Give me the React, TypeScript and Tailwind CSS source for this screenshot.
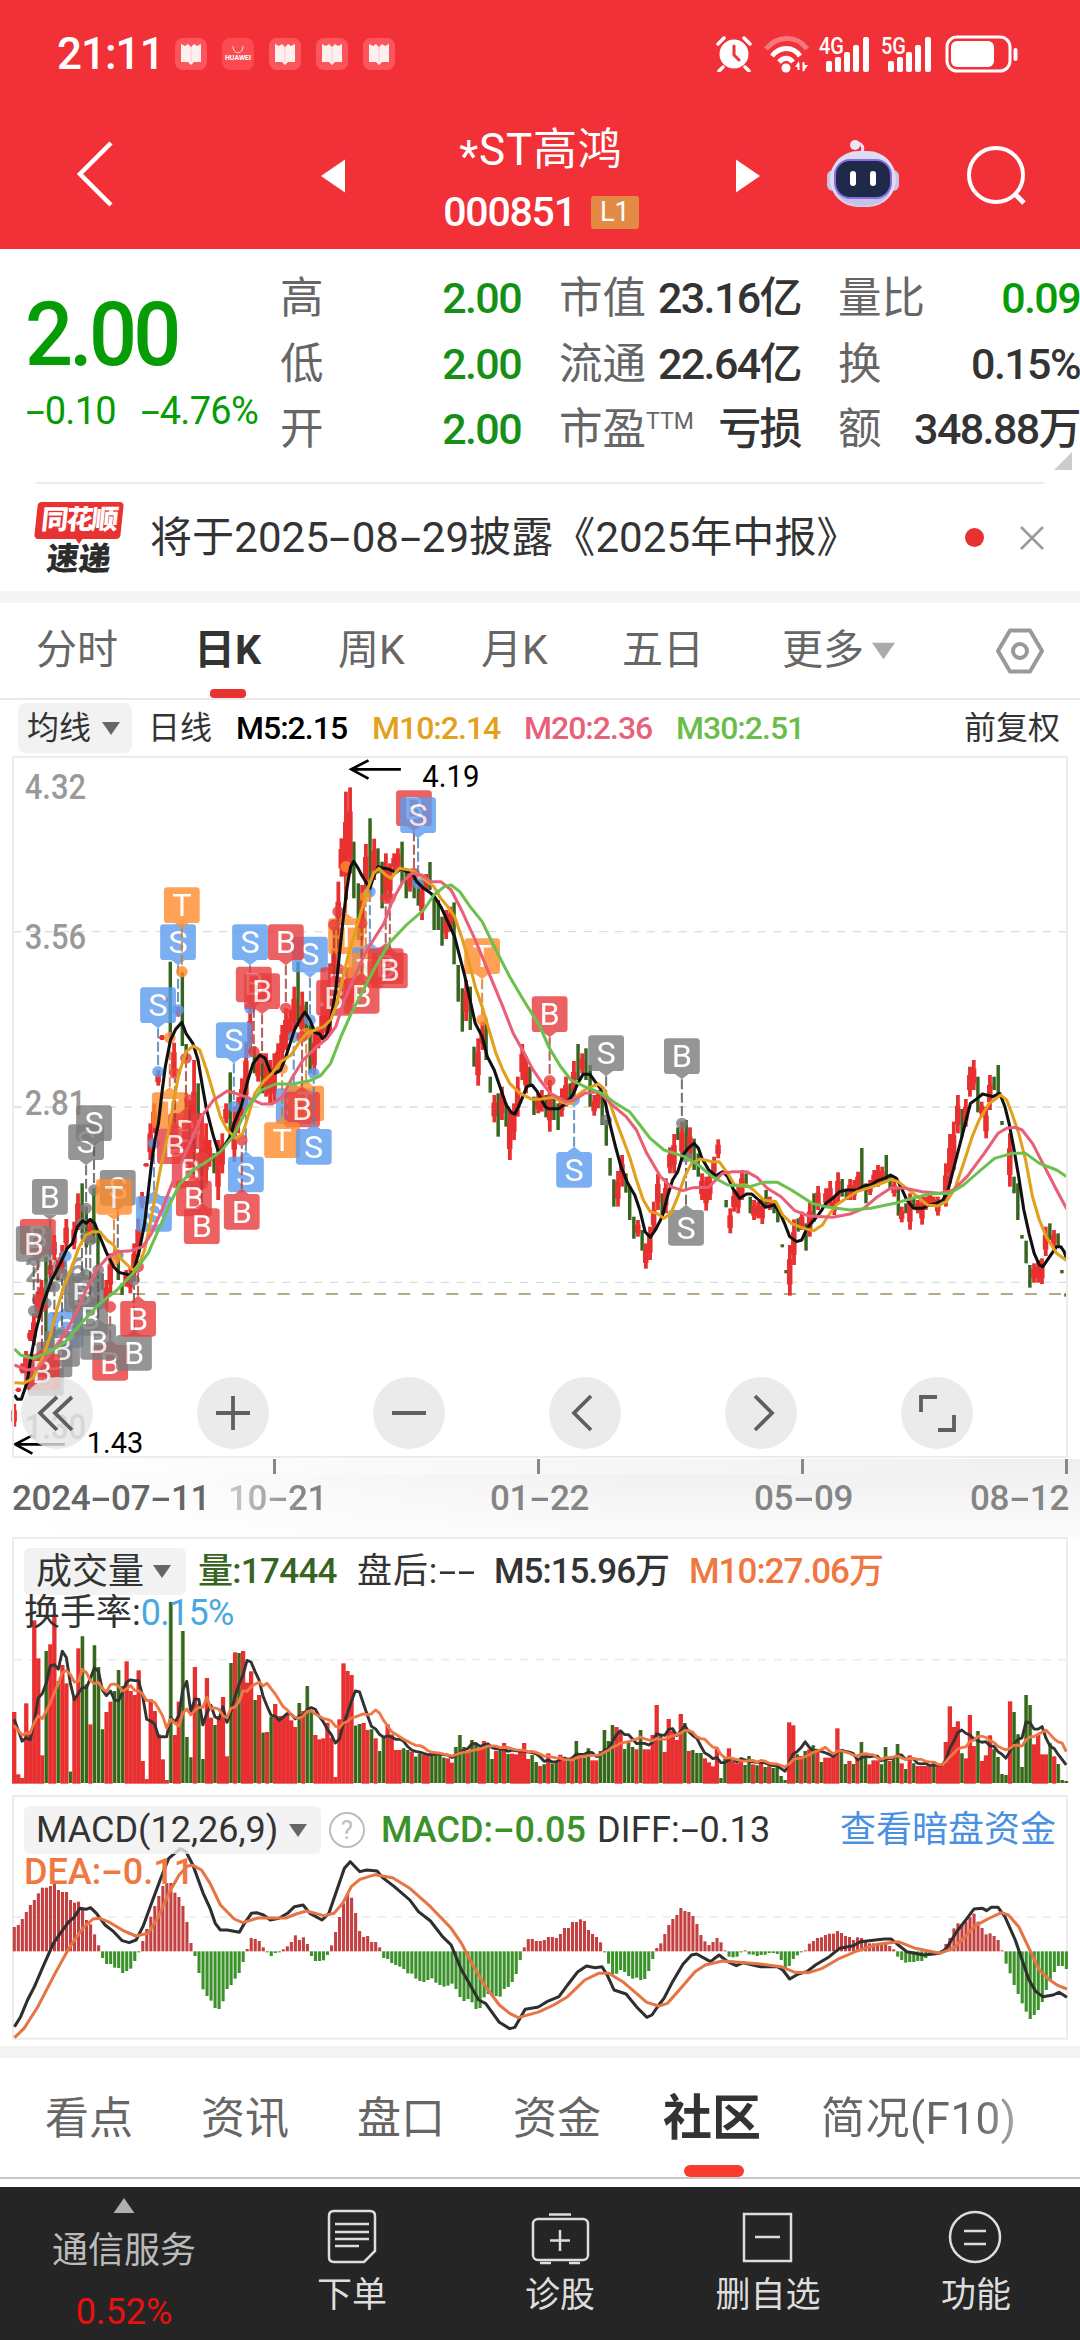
import { Fragment } from "react";
import type { ReactNode } from "react";

// Plot units: 3136 wide per panel, split into two halves of 1568.
const HALF = 1568;
const STEP = 11.66;
const RED = "#e83030";
const GREEN = "#37651f";

type Bar = { x: number; top: number; bottom: number };

function points(left: string, right: string) {
  const moved = right.split(" ").map((pair) => {
    const [x, y] = pair.split(",").map(Number);
    return `${x + HALF},${y}`;
  });
  return `${left} ${moved.join(" ")}`;
}

function bars(data: string, offset = 0): Bar[] {
  return data.split(" ").map((item) => {
    const [x, top, bottom] = item.split(",").map(Number);
    return { x: x + offset, top, bottom };
  });
}

const ma5 = points(
  "42,1965 50,1978 62,1978 78,1930 90,1850 105,1770 125,1690 150,1620 175,1570 195,1525 210,1510 225,1460 240,1442 250,1450 262,1438 275,1450 290,1490 310,1540 330,1580 345,1597 365,1602 380,1606 392,1580 405,1530 420,1450 430,1360 440,1270 450,1200 460,1150 470,1060 480,980 495,900 510,868 528,847 540,880 560,910 575,960 588,1040 600,1110 620,1190 635,1238 650,1220 668,1190 680,1150 700,1100 720,1020 735,970 755,945 770,955 785,995 800,1000 815,990 830,950 855,870 870,840 885,816 900,840 915,878 928,882 938,898 950,880 962,830 975,750 985,650 995,550 1008,440 1018,380 1027,364 1040,385 1050,405 1065,430 1074,445 1085,410 1098,380 1115,385 1130,388 1150,398 1165,385 1180,395 1195,395 1210,425 1230,445 1245,455 1262,470 1280,500 1300,545 1320,590 1335,650 1350,710 1365,780 1380,850 1400,890 1415,950 1435,990 1455,1050 1470,1095 1485,1118 1495,1122 1510,1090 1530,1040 1545,1035 1560,1055",
  "15,1100 25,1106 55,1106 75,1090 95,1065 110,1030 125,1003 145,1003 160,1025 175,1045 190,1090 205,1160 218,1215 235,1280 255,1330 275,1365 290,1410 305,1475 320,1492 335,1470 355,1430 370,1370 385,1320 400,1295 415,1245 430,1225 447,1210 460,1225 470,1255 490,1290 510,1307 530,1295 545,1310 560,1345 580,1375 600,1362 615,1362 635,1380 655,1402 680,1395 695,1415 710,1450 725,1490 745,1505 760,1500 775,1465 800,1435 815,1415 830,1390 850,1375 870,1355 890,1350 920,1350 940,1338 960,1335 980,1322 1000,1315 1018,1305 1035,1315 1050,1345 1065,1380 1085,1405 1110,1405 1130,1395 1150,1390 1170,1380 1185,1350 1200,1290 1215,1230 1235,1150 1250,1090 1270,1075 1285,1062 1315,1070 1335,1060 1350,1100 1362,1150 1375,1220 1390,1310 1405,1410 1420,1480 1435,1540 1450,1575 1460,1580 1480,1550 1500,1520 1512,1520 1522,1535 1530,1558",
);
const ma10 = points(
  "42,1928 70,1930 95,1915 125,1850 145,1790 165,1710 185,1640 205,1590 230,1520 250,1485 270,1475 290,1475 310,1500 330,1515 350,1555 370,1575 388,1592 405,1570 420,1530 440,1430 465,1290 490,1170 505,1080 520,1000 540,935 562,918 580,930 600,990 620,1060 640,1130 660,1170 685,1195 705,1180 720,1130 740,1060 765,1025 790,1000 815,965 845,945 870,905 890,880 915,870 940,860 960,840 975,800 990,740 1010,650 1030,580 1050,510 1070,440 1085,400 1100,385 1120,405 1135,415 1160,385 1190,390 1210,400 1240,425 1260,440 1280,475 1300,500 1320,530 1340,590 1360,660 1380,740 1400,800 1420,870 1440,940 1460,990 1480,1030 1510,1060 1545,1078",
  "0,1078 40,1072 60,1085 80,1092 95,1088 110,1065 130,1050 150,1040 170,1032 185,1045 200,1080 220,1140 240,1195 260,1250 280,1320 300,1380 320,1415 340,1420 360,1435 380,1420 400,1370 420,1310 440,1270 465,1257 500,1265 520,1265 545,1300 565,1335 600,1335 620,1350 650,1380 685,1385 705,1425 730,1450 765,1465 795,1472 820,1455 835,1430 860,1395 890,1375 920,1355 950,1345 980,1335 1020,1318 1040,1325 1065,1345 1090,1365 1125,1395 1155,1398 1180,1385 1205,1345 1230,1270 1255,1190 1275,1140 1305,1090 1338,1065 1355,1080 1370,1120 1390,1180 1410,1260 1430,1370 1450,1440 1470,1490 1500,1540 1530,1562",
);
const ma20 = points(
  "42,1875 80,1890 110,1885 150,1835 190,1780 220,1720 250,1650 280,1590 310,1555 340,1535 380,1532 415,1520 440,1480 470,1410 500,1330 530,1260 560,1190 585,1130 620,1080 660,1053 690,1062 720,1073 760,1092 790,1092 820,1070 850,1010 880,960 920,920 950,895 975,860 1000,780 1030,710 1060,640 1090,590 1115,550 1140,480 1170,425 1195,400 1225,405 1250,425 1280,425 1310,450 1340,510 1380,600 1420,700 1460,800 1490,880 1520,935 1545,985",
  "0,1020 30,1060 75,1085 100,1080 130,1060 170,1055 210,1095 250,1130 280,1170 310,1240 350,1310 380,1340 415,1352 445,1343 490,1342 530,1300 560,1295 600,1295 630,1312 660,1345 700,1370 740,1412 780,1428 850,1432 900,1422 940,1405 980,1370 1020,1343 1060,1345 1110,1355 1160,1360 1200,1350 1240,1310 1290,1240 1330,1180 1355,1165 1380,1162 1400,1170 1430,1210 1460,1270 1500,1350 1530,1408",
);
const ma30 = points(
  "42,1827 60,1845 95,1855 140,1838 190,1805 240,1745 290,1690 340,1650 390,1595 430,1540 460,1470 490,1400 520,1335 560,1290 600,1265 640,1235 680,1185 720,1100 760,1050 800,1032 850,1032 900,1022 930,1008 960,970 990,890 1020,820 1050,760 1090,680 1130,610 1180,555 1230,510 1260,465 1290,440 1310,435 1335,455 1365,500 1400,545 1440,630 1480,710 1520,780",
  "0,860 25,920 60,980 90,1020 130,1040 180,1060 220,1090 260,1115 290,1155 320,1195 360,1230 420,1250 460,1275 500,1310 545,1335 610,1340 650,1327 690,1327 730,1350 790,1390 830,1400 900,1410 960,1405 1030,1390 1080,1375 1130,1362 1190,1360 1230,1335 1280,1290 1320,1255 1370,1240 1410,1240 1450,1270 1500,1290 1530,1310",
);

const redCandles = [
  ...bars(
    "41,1992,2060 53,1943,1956 64,1870,1900 75,1833,1900 87,1770,1803 98,1720,1816 108,1655,1735 120,1620,1700 146,1560,1615 157,1485,1560 168,1560,1610 180,1515,1600 192,1437,1530 215,1445,1528 226,1360,1470 261,1440,1510 308,1620,1700 320,1540,1660 366,1590,1640 378,1580,1660 389,1510,1625 401,1436,1550 412,1356,1405 424,1269,1280 436,1150,1260 447,1090,1180 459,990,1037 470,885,900 482,773,785 505,908,1010 517,800,830 540,1060,1230 551,1080,1300 563,960,1300 586,1120,1350 598,1150,1330 608,1200,1280 633,1200,1380 645,1180,1300 656,1090,1150 680,1100,1265 691,1070,1180 702,1015,1130 714,905,1110 726,805,940 749,950,1025 772,940,1070 784,960,1090 796,940,1090 807,910,1000 819,855,960 830,805,930 842,810,900 854,740,870 877,755,900 912,870,1005 924,860,925 935,800,900 947,760,880 958,670,880 970,560,800 982,425,640 991,295,410 1004,155,480 1016,142,400 1051,435,600 1062,312,450 1086,296,420 1120,340,480 1132,370,475 1144,340,390 1155,325,390 1190,390,455 1225,420,540 1237,402,450 1295,510,597 1307,500,575 1353,720,843 1388,895,1037 1400,845,930 1435,1065,1147 1457,1040,1140 1480,1110,1260 1492,1090,1200 1503,1010,1130 1516,912,1020 1527,950,1060 1562,1060,1120",
  ),
  ...bars(
    "5,1050,1115 28,1020,1175 63,1045,1130 75,1010,1100 98,963,1080 122,940,1000 157,1065,1127 168,1050,1105 226,1293,1400 238,1245,1340 284,1440,1490 307,1510,1586 319,1460,1560 330,1385,1475 342,1302,1410 365,1315,1420 377,1222,1300 389,1182,1300 412,1145,1260 435,1162,1260 470,1300,1380 482,1310,1412 493,1300,1380 505,1250,1310 517,1198,1255 552,1405,1480 563,1350,1415 575,1340,1420 586,1290,1380 621,1380,1440 633,1385,1435 645,1375,1452 667,1370,1410 725,1515,1667 737,1438,1575 760,1415,1470 783,1385,1490 807,1338,1410 830,1345,1400 842,1323,1400 854,1370,1425 865,1297,1390 900,1317,1380 912,1320,1380 923,1295,1350 958,1320,1365 970,1290,1340 981,1275,1340 993,1280,1330 1028,1320,1370 1050,1400,1447 1074,1360,1469 1097,1380,1420 1109,1370,1454 1120,1370,1410 1132,1355,1400 1143,1370,1400 1155,1370,1427 1178,1270,1400 1190,1182,1330 1201,1145,1290 1213,1065,1180 1236,1077,1160 1248,980,1070 1259,960,1050 1282,1085,1130 1295,1100,1195 1306,1005,1110 1364,1180,1340 1434,1570,1628 1446,1560,1628 1457,1555,1632 1468,1460,1548 1492,1470,1520",
    HALF,
  ),
];

const greenCandles = [
  ...bars(
    "133,1550,1800 168,1560,1620 238,1330,1480 250,1400,1522 272,1345,1510 284,1470,1610 296,1600,1650 343,1540,1620 354,1630,1665 494,665,890 529,697,918 540,912,960 575,1030,1140 586,1190,1250 621,1240,1300 668,997,1190 738,920,1000 761,950,1060 865,665,860 889,785,880 900,850,1000 1027,305,475 1040,430,600 1074,235,470 1097,325,400 1109,365,505 1167,305,430 1179,390,475 1202,400,475 1214,420,497 1248,366,450 1260,470,570 1272,480,570 1283,530,617 1318,487,673 1330,675,785 1342,745,875 1365,740,870 1376,920,980 1411,840,960 1423,1010,1058 1446,1060,1190 1469,1090,1160 1538,980,1040 1550,1070,1125",
  ),
  ...bars(
    "17,1065,1132 40,1070,1140 52,1090,1170 87,1030,1090 110,912,1020 133,925,1020 145,975,1100 180,1060,1155 192,1140,1217 203,1254,1307 214,1318,1400 249,1300,1358 260,1340,1440 272,1430,1496 296,1470,1532 354,1360,1430 400,1162,1200 424,1140,1250 447,1196,1290 459,1240,1310 540,1380,1402 598,1300,1340 610,1370,1420 656,1350,1400 679,1380,1420 690,1400,1447 703,1513,1522 714,1590,1600 749,1435,1475 772,1450,1532 795,1360,1445 877,1317,1370 889,1350,1380 934,1224,1350 946,1330,1390 1005,1245,1325 1016,1310,1350 1040,1340,1427 1062,1390,1420 1085,1370,1400 1225,1107,1190 1271,1010,1117 1318,1010,1050 1330,975,1065 1341,1143,1155 1376,1310,1360 1387,1330,1440 1399,1485,1496 1411,1502,1570 1422,1575,1643 1480,1450,1500 1504,1480,1520 1515,1590,1600 1527,1660,1670",
    HALF,
  ),
];

// letter + tone, centre x, box top, y of the dot the stem leads to
type Marker = [string, string, number, number, number];

const toneFill: Record<string, string> = {
  blue: "#5c9cee",
  red: "#e83c3c",
  orange: "#ff8b2c",
  gray: "#7b7b7b",
};

const stemStroke: Record<string, string> = {
  blue: "#4a80b8",
  red: "#a83a3a",
  orange: "#d8741f",
  gray: "#555",
};

const markers: Marker[] = [
  ["S", "gray", 250, 1153, 1405],
  ["S", "gray", 273, 1096, 1350],
  ["B", "gray", 145, 1317, 1640],
  ["B", "red", 110, 1437, 1680],
  ["B", "gray", 98, 1458, 1713],
  ["S", "gray", 342, 1290, 1545],
  ["T", "orange", 331, 1317, 1560],
  ["S", "blue", 447, 1368, 1210],
  ["S", "blue", 191, 1716, 1548],
  ["S", "gray", 250, 1600, 1490],
  ["B", "gray", 238, 1610, 1450],
  ["B", "gray", 262, 1680, 1500],
  ["B", "gray", 133, 1860, 1690],
  ["B", "gray", 158, 1805, 1640],
  ["B", "gray", 180, 1773, 1600],
  ["B", "red", 122, 1842, 1700],
  ["B", "red", 320, 1815, 1700],
  ["B", "gray", 285, 1752, 1590],
  ["B", "gray", 389, 1785, 1620],
  ["B", "red", 401, 1683, 1580],
  ["S", "blue", 459, 742, 995],
  ["S", "blue", 517, 553, 810],
  ["T", "orange", 528, 442, 695],
  ["T", "orange", 493, 1057, 893],
  ["B", "red", 540, 1120, 955],
  ["B", "red", 508, 1165, 1000],
  ["B", "red", 551, 1238, 1080],
  ["B", "red", 563, 1322, 1160],
  ["B", "red", 586, 1405, 1250],
  ["S", "blue", 714, 1250, 1090],
  ["B", "red", 702, 1362, 1200],
  ["S", "blue", 679, 847, 1100],
  ["S", "blue", 726, 553, 805],
  ["B", "red", 737, 680, 935],
  ["B", "red", 761, 700, 955],
  ["S", "blue", 900, 590, 840],
  ["B", "red", 830, 553, 805],
  ["S", "blue", 853, 1045, 890],
  ["T", "orange", 889, 1037, 880],
  ["B", "red", 877, 1055, 890],
  ["T", "orange", 819, 1147, 985],
  ["S", "blue", 911, 1167, 1000],
  ["T", "orange", 1005, 535, 380],
  ["B", "red", 982, 682, 515],
  ["B", "red", 970, 720, 555],
  ["S", "blue", 1074, 622, 455],
  ["T", "orange", 1062, 638, 470],
  ["B", "red", 1120, 625, 475],
  ["B", "red", 1132, 638, 475],
  ["B", "red", 1050, 714, 550],
  ["B", "red", 1202, 151, 400],
  ["S", "blue", 1214, 172, 430],
  ["T", "orange", 1400, 595, 840],
  ["B", "red", 1596, 769, 1022],
  ["S", "blue", 1667, 1236, 1080],
  ["S", "gray", 1760, 886, 1140],
  ["B", "gray", 1980, 895, 1150],
  ["S", "gray", 1992, 1410, 1250],
];

const volumeTops =
  "543r 730r 741r 517r 600r 268r 382r 673r 360g 340r 250r 450g 402r 457r 722g 500r 352r 316g 460g 580r 343g 408g 595g 543r 512r 480g 417g 465g 391r 480r 492r 418r 690r 744r 505r 540r 610r 685r 747r 213g 612r 512r 300g 618g 679g 408r 520g 684g 441r 560r 582g 555r 498r 676r 396g 364r 366g 360r 455r 421r 507g 492r 605g 603r 558g 519r 555r 555r 550r 568r 588r 516g 540r 465g 540g 612r 625r 622r 575r 620r 738r 565r 397r 420r 432r 584g 579g 576r 597r 595g 622r 660g 618g 580r 610r 657r 657r 652g 657g 662r 677g 668g 672r 675r 660g 670g 670g 680g 682r 695r 648g 612g 648g 660r 627g 640g 655r 630r 640g 684g 660r 655g 636r 669g 668r 670r 660r 636r 684r 672g 693g 705r 700g 667r 698g 690g 671r 680r 685g 680r 630g 675r 680g 652g 688r 688r 660g 597g 630g 582g 588r 600r 654g 630g 648g 655r 597g 655r 655r 612r 522r 615g 663r 564r 600r 627r 549r 576g 660r 657g 666g 666g 682r 694r 706r 650r 741g 684g 652r 690r 697r 690r 702g 675g 700r 703g 690r 708g 706r 711g 705g 735g 747g 574r 583r 670g 675r 660g 655r 643g 655r 693g 680r 680r 675r 592r 660g 699g 690r 699g 685r 633g 670g 700r 688r 688r 700g 648g 690r 685g 639g 697r 714g 673r 697g 705r 705r 705r 708r 690g 705r 705r 633r 526r 588r 571r 667g 682r 552r 645r 600g 690r 673r 613r 655g 678g 729g 732g 511r 543g 610g 708g 492g 522g 640r 610r 670r 670r 637g 676r 699g 747g 750g";

const volume = volumeTops.split(" ").map((item) => ({ top: parseInt(item, 10), up: item.endsWith("r") }));

function average(period: number) {
  const tops = [...Array<number>(period).fill(period === 5 ? 570 : 588), ...volume.map((bar) => bar.top)];
  return volume
    .map((_, i) => {
      const slice = tops.slice(i + 1, i + 1 + period);
      return `${41 + i * STEP},${slice.reduce((sum, value) => sum + value, 0) / period}`;
    })
    .join(" ");
}

const macdEnds =
  "411 405 387 366 345 330 310 293 293 288 281 300 306 306 330 338 335 360 390 403 433 466 504 522 522 533 534 549 543 536 513 486 453 417 380 348 318 288 279 279 308 321 348 396 459 498 549 598 618 632 654 657 634 597 585 566 549 516 477 444 447 453 472 486 498 489 486 478 469 456 436 450 442 462 498 513 513 511 495 466 426 381 340 312 323 369 423 441 438 456 456 472 504 507 519 525 530 537 550 551 566 573 576 570 565 578 585 590 587 581 597 621 633 627 637 657 654 622 612 618 618 620 597 591 576 552 510 472 447 447 453 453 450 441 441 444 432 414 414 396 396 388 393 420 432 441 457 487 521 553 551 540 546 558 566 563 570 567 543 507 474 460 432 405 387 375 354 363 366 378 402 435 454 465 456 444 457 481 500 502 500 487 481 493 494 498 495 494 489 489 492 510 535 528 507 496 487 481 461 453 444 442 435 431 431 423 429 438 441 450 442 444 455 460 460 460 462 462 468 478 500 510 518 516 516 513 513 504 495 490 488 480 462 444 415 400 402 394 382 371 395 414 433 430 438 450 481 521 550 585 612 640 665 687 675 660 636 600 570 546 528 528 537"
    .split(" ")
    .map(Number);

const diffLine = points(
  "42,710 60,680 80,630 100,590 125,530 155,460 175,430 200,395 215,382 232,355 250,358 263,353 280,370 305,405 330,425 355,452 375,458 395,450 415,410 440,340 465,270 490,205 510,188 524,176 540,185 560,225 590,310 610,355 625,400 640,420 660,420 695,427 710,400 730,370 745,368 765,375 785,390 810,385 835,370 855,350 880,345 900,370 935,390 955,370 975,310 1000,235 1017,215 1045,245 1065,240 1095,243 1110,262 1145,290 1190,330 1215,365 1250,393 1285,440 1310,465 1340,540 1360,575 1390,630 1410,640 1450,697 1480,716 1495,712 1525,658 1560,652",
  "0,648 20,635 55,620 80,585 110,545 135,528 160,533 180,530 195,555 215,600 250,612 280,650 310,682 325,675 345,645 360,625 385,575 415,523 440,495 455,492 495,515 520,495 545,515 570,527 590,518 640,530 690,530 705,540 725,567 750,552 775,545 800,525 840,500 870,475 910,467 930,455 1000,447 1020,447 1040,465 1065,485 1115,495 1160,490 1180,475 1210,425 1240,385 1260,357 1285,355 1297,362 1310,352 1330,352 1350,380 1380,450 1400,510 1420,570 1440,605 1460,620 1490,615 1507,607 1530,622",
);
const deaLine = points(
  "42,743 70,715 110,650 160,550 200,475 240,415 270,387 290,385 320,398 360,423 395,438 430,430 460,380 490,310 520,255 545,228 560,226 585,240 610,280 640,345 680,387 705,398 750,384 830,384 860,372 890,363 940,377 970,370 995,340 1020,290 1045,268 1090,254 1140,263 1190,295 1250,350 1310,415 1340,460 1370,520 1410,590 1450,645 1480,670 1505,683 1560,667",
  "0,664 40,645 80,620 130,570 170,550 200,550 240,575 280,610 310,637 345,648 370,640 400,605 450,545 480,525 530,513 560,515 640,522 700,530 740,547 780,548 820,535 870,505 920,483 980,463 1040,455 1090,475 1160,490 1200,475 1235,440 1260,410 1300,387 1340,368 1360,375 1390,410 1420,475 1450,540 1480,570 1505,587 1530,597",
);

// Figures with the wide dash the quote board uses.
function Num({ children, className = "" }: { children: string; className?: string }) {
  const parts = children.split("-");
  return (
    <span className={`whitespace-nowrap [font-stretch:88%] ${className}`}>
      {parts.map((part, i) => (
        <Fragment key={i}>
          {i > 0 ? <span className="mx-[0.13em] inline-block scale-x-[1.8]">-</span> : null}
          {part}
        </Fragment>
      ))}
    </span>
  );
}

function Caret({ className = "" }: { className?: string }) {
  return (
    <svg viewBox="0 0 18 13" className={className}>
      <path d="M0 0h18l-9 13z" fill="currentColor" />
    </svg>
  );
}

function BookIcon() {
  return (
    <div className="flex size-8 items-center justify-center rounded-lg bg-[#fd555c]">
      <svg viewBox="0 0 24 24" className="size-6" fill="#fff0f0">
        <path d="M2 2l4 2 3-2 3 3 3-3 3 2 4-2v18h-7l-3 3-3-3H2z" />
        <path d="M12 5v15" stroke="#ffc9cb" strokeWidth="1" />
      </svg>
    </div>
  );
}

function Signal({ label }: { label: string }) {
  return (
    <svg viewBox="0 0 52 38" className="h-[38px] w-[52px] overflow-visible" fill="#fff">
      <text x="0" y="19" fontSize="23" fontWeight="500" textLength="25" lengthAdjust="spacingAndGlyphs">
        {label}
      </text>
      <rect x="7" y="26" width="6" height="11" rx="2" />
      <rect x="16" y="22" width="6" height="15" rx="2" />
      <rect x="25" y="17" width="6" height="20" rx="2" />
      <rect x="34" y="10" width="6" height="27" rx="2" />
      <rect x="44" y="2" width="6" height="35" rx="2" />
    </svg>
  );
}

function StatusBar() {
  return (
    <div className="flex h-[108px] items-center pl-[57px] pr-[61px]">
      <span className="w-[118px] text-[44px] font-medium leading-none tracking-[-1px]">21:11</span>
      <div className="flex gap-[15px]">
        <BookIcon />
        <div className="flex size-8 flex-col items-center justify-center rounded-lg bg-[#fb4a51]">
          <svg viewBox="0 0 12 8" className="h-2 w-3" fill="none" stroke="#fff" strokeWidth="0.8">
            <path d="M1 0c0 9 10 9 10 0" />
          </svg>
          <span className="text-[7px] font-bold leading-[9px]">HUAWEI</span>
        </div>
        <BookIcon />
        <BookIcon />
        <BookIcon />
      </div>
      <div className="ml-auto flex items-center">
        <svg viewBox="0 0 36 36" className="mr-3 size-9" fill="none" stroke="#fff" strokeWidth="3.500" strokeLinecap="round">
          <circle cx="18" cy="18" r="14.500" fill="#fff" stroke="none" />
          <path d="M2 8l6-6M34 8l-6-6M7 31l-4 4M29 31l4 4" />
          <path d="M18 10v9l5 5" stroke="#f13037" strokeWidth="3" />
        </svg>
        <svg viewBox="0 0 46 38" className="mr-[9px] h-[38px] w-[46px]" fill="none" stroke="#fff" strokeWidth="5">
          <path d="M2 14c11-14 31-14 41 0" opacity="0.35" />
          <path d="M8 21c8-10 21-10 28 0" />
          <path d="M15 27c5-5 10-5 14 0" />
          <circle cx="22" cy="33" r="4.500" fill="#fff" stroke="none" />
          <path d="M35 26l-4 6h4zM39 37l5-7h-5z" fill="#fff" stroke="none" />
          <path d="M34.500 28v7M39.500 27v9" strokeWidth="2" />
        </svg>
        <div className="mr-[10px]">
          <Signal label="4G" />
        </div>
        <div className="mr-3">
          <Signal label="5G" />
        </div>
        <svg viewBox="0 0 74 38" className="h-[38px] w-[74px]" fill="none" stroke="#fff" strokeWidth="3">
          <rect x="2" y="2" width="63" height="34" rx="10" />
          <rect x="6" y="6" width="43" height="26" rx="6" fill="#fff" stroke="none" />
          <path d="M70.500 15v9" strokeWidth="4" strokeLinecap="round" />
        </svg>
      </div>
    </div>
  );
}

function RobotIcon() {
  return (
    <svg viewBox="0 0 74 68" className="h-[68px] w-[74px]">
      <path d="M36 12c2-5 0-8-4-9" fill="none" stroke="#f4dcef" strokeWidth="3" />
      <circle cx="29" cy="5" r="5" fill="#eee6fa" />
      <rect x="1" y="30" width="14" height="21" rx="6" fill="#c9c4e6" />
      <rect x="59" y="30" width="14" height="21" rx="6" fill="#c9c4e6" />
      <rect x="4" y="11" width="66" height="56" rx="28" fill="#dedcf3" />
      <path d="M10 53c10 18 44 18 54 0" fill="#c7c2ea" />
      <rect x="9" y="20" width="56" height="38" rx="15" fill="#1f2a4a" stroke="#8b6be0" strokeWidth="2" />
      <rect x="24" y="31" width="6" height="15" rx="3" fill="#fff" />
      <rect x="44" y="31" width="6" height="15" rx="3" fill="#fff" />
    </svg>
  );
}

function Header() {
  return (
    <header className="h-[249px] bg-[#f13037] text-white">
      <StatusBar />
      <div className="flex h-[136px] items-center pl-[75px] pr-[52px]">
        <svg viewBox="0 0 38 66" className="-mt-1 h-[66px] w-[38px]" fill="none" stroke="#fff" strokeWidth="4.500">
          <path d="M36 2L5 33l31 31" />
        </svg>
        <Caret className="ml-[202px] h-6 w-9 rotate-90" />
        <div className="ml-[90px] flex w-[200px] flex-col items-center pt-[13px]">
          <div className="flex h-[60px] items-center text-[44px] leading-none tracking-[0.8px]">
            <span className="translate-y-[7px]">*</span>ST高鸿
          </div>
          <div className="flex h-[66px] items-center gap-[15px]">
            <Num className="text-[41px] font-medium leading-none tracking-[-1.2px]">000851</Num>
            <span className="flex h-[33px] w-12 items-center justify-center rounded-[3px] bg-[#e38b45] text-[27px] leading-none">
              L1
            </span>
          </div>
        </div>
        <Caret className="ml-[89px] h-6 w-9 -rotate-90" />
        <div className="-mt-1 ml-[60px]">
          <RobotIcon />
        </div>
        <svg viewBox="0 0 62 62" className="ml-auto size-[62px]" fill="none" stroke="#fff" strokeWidth="4">
          <circle cx="30" cy="30" r="27" />
          <path d="M49 49l9 9" strokeWidth="5" />
        </svg>
      </div>
    </header>
  );
}

function Stat({ label, value, tone = "text-[#333]" }: { label: ReactNode; value: string; tone?: string }) {
  return (
    <div className="flex h-[65.5px] items-center justify-between">
      <span className="flex whitespace-nowrap text-[43.5px] text-[#666]">{label}</span>
      <Num className={`text-[43px] font-medium tracking-[-1.6px] ${tone}`}>{value}</Num>
    </div>
  );
}

function Quote() {
  return (
    <section className="relative h-[233px] pt-[17px]">
      <div className="flex leading-none">
        <div className="w-[280px] pl-[25px] pt-[25px] text-[#059c05]">
          <div className="origin-left scale-x-95 text-[89px] font-medium leading-[88px]">
            <Num className="tracking-[-4px]">2.00</Num>
          </div>
          <div className="mt-3 flex gap-6 text-[38px] leading-[40px] tracking-[-0.7px]">
            <Num>-0.10</Num>
            <Num>-4.76%</Num>
          </div>
        </div>
        <div className="w-[241px]">
          <Stat label="高" value="2.00" tone="text-[#159015]" />
          <Stat label="低" value="2.00" tone="text-[#159015]" />
          <Stat label="开" value="2.00" tone="text-[#159015]" />
        </div>
        <div className="ml-[38px] w-[242px]">
          <Stat label="市值" value="23.16亿" />
          <Stat label="流通" value="22.64亿" />
          <Stat
            label={
              <>
                市盈<span className="pt-0.5 text-[23px]">TTM</span>
              </>
            }
            value="亏损"
          />
        </div>
        <div className="ml-[37px] w-[242px]">
          <Stat label="量比" value="0.09" tone="text-[#059c05]" />
          <Stat label="换" value="0.15%" />
          <Stat label="额" value="348.88万" />
        </div>
      </div>
      <svg viewBox="0 0 18 18" className="absolute bottom-3 right-2 size-[18px]">
        <path d="M18 0v18H0z" fill="#ccc" />
      </svg>
    </section>
  );
}

function News() {
  return (
    <section className="mx-9 flex h-[109px] items-center border-t-2 border-[#ececec]">
      <div className="flex w-[114px] flex-col">
        <div className="flex flex-col items-center self-start">
          <div className="flex h-[37px] w-[86px] -skew-x-6 items-center justify-center rounded bg-[#e83232] text-[27px] font-black leading-none tracking-[-2px] text-white">
            同花顺
          </div>
          <Caret className="-mt-px h-[6px] w-3 text-[#e83232]" />
        </div>
        <div className="ml-[11px] -skew-x-6 text-[32px] font-black leading-[30px] text-[#2c2c2c]">速递</div>
      </div>
      <Num className="text-[42px] tracking-[0.1px] text-[#333]">将于2025-08-29披露《2025年中报》</Num>
      <span className="ml-auto mr-9 size-[19px] rounded-full bg-[#e83232]" />
      <svg viewBox="0 0 24 24" className="size-6" fill="none" stroke="#999" strokeWidth="2.500">
        <path d="M1 1l22 22M23 1L1 23" />
      </svg>
    </section>
  );
}

function PeriodTabs() {
  return (
    <nav className="flex h-[97px] items-center border-b-2 border-[#e8e8e8] pl-9 pr-9 text-[41px] text-[#666]">
      <span className="w-[158px]">分时</span>
      <span className="relative flex h-full w-[144px] items-center font-bold text-[#333]">
        日K
        <i className="absolute bottom-0 left-4 h-[9px] w-9 rounded bg-[#e83232]" />
      </span>
      <span className="w-[143px]">周K</span>
      <span className="w-[141px]">月K</span>
      <span className="w-[160px]">五日</span>
      <span className="flex items-center gap-2">
        更多
        <Caret className="h-[18px] w-[23px] text-[#aaa]" />
      </span>
      <svg viewBox="0 0 48 46" className="ml-auto h-[46px] w-12" fill="none" stroke="#999" strokeWidth="4">
        <path d="M14 2.500h20L46 23 34 43.500H14L2 23z" strokeLinejoin="round" />
        <circle cx="24" cy="23" r="7" />
      </svg>
    </nav>
  );
}

function AverageRow() {
  return (
    <div className="flex h-[56px] items-center pl-[18px] pr-5 text-[32px] leading-none text-[#333]">
      <span className="flex h-[50px] w-[114px] items-center gap-[11px] rounded-lg bg-[#f2f2f2] pl-[9px]">
        均线
        <Caret className="h-[13px] w-[18px] text-[#666]" />
      </span>
      <span className="ml-4 w-[88px]">日线</span>
      <Num className="w-[136px] font-medium tracking-[-1px] text-black">M5:2.15</Num>
      <Num className="w-[152px] font-medium tracking-[-1px] text-[#e3a01b]">M10:2.14</Num>
      <Num className="w-[152px] font-medium tracking-[-1px] text-[#e8617a]">M20:2.36</Num>
      <Num className="w-[140px] font-medium tracking-[-1px] text-[#6bbd4b]">M30:2.51</Num>
      <span className="ml-auto">前复权</span>
    </div>
  );
}

function MarkerPin({ marker }: { marker: Marker }) {
  const [letter, tone, x, top, dot] = marker;
  const fill = toneFill[tone];
  const down = dot > top;
  const edge = down ? top + 107 : top;
  const tip = down ? edge + 16 : edge - 16;
  return (
    <g opacity="0.8">
      <path d={`M${x} ${tip}V${dot}`} stroke={stemStroke[tone]} strokeWidth="6" strokeDasharray="30 10" />
      <circle cx={x} cy={dot} r="17" fill={fill} />
      <rect x={x - 52} y={top} width="104" height="107" rx="10" fill={fill} />
      <path d={`M${x - 20} ${edge}L${x} ${tip}L${x + 20} ${edge}z`} fill={fill} />
      <text x={x} y={top + 86} fontSize="94" fill="#fff" textAnchor="middle">
        {letter}
      </text>
    </g>
  );
}

const gridLabels: [string, number][] = [
  ["4.32", 178],
  ["3.56", 627],
  ["2.81", 1125],
  ["2.06", 1625],
  ["1.30", 2097],
];

function KLine() {
  return (
    <svg viewBox="0 48 3136 2109" preserveAspectRatio="none" className="block h-[703px] w-full">
      <g stroke="#dcdcdc" strokeWidth="4" strokeDasharray="24 22">
        <path d="M38 575H3098M38 1101H3098M38 1627H3098" />
      </g>
      <path d="M36 1662H3098" stroke="#b7a888" strokeWidth="6" strokeDasharray="35 35" />
      {gridLabels.map(([label, y]) => (
        <text key={label} x="72" y={y} fontSize="106" fontWeight="500" fill="#999" textLength="178" lengthAdjust="spacingAndGlyphs">
          {label}
        </text>
      ))}
      {greenCandles.map((bar) => (
        <rect key={`${bar.x}-${bar.top}`} x={bar.x - 4.5} y={bar.top} width="10" height={bar.bottom - bar.top} fill={GREEN} />
      ))}
      {redCandles.map((bar) => {
        const size = bar.bottom - bar.top;
        return (
          <g key={`${bar.x}-${bar.top}`} fill={RED}>
            <rect x={bar.x - 5} y={bar.top} width="11" height={size} />
            <rect x={bar.x - 8} y={bar.top + size * 0.28} width="16" height={size * 0.5} />
          </g>
        );
      })}
      {markers.map((marker) => (
        <MarkerPin key={`${marker[2]}-${marker[3]}`} marker={marker} />
      ))}
      <g fill="none" strokeWidth="9" strokeLinejoin="round">
        <polyline points={ma5} stroke="#111" />
        <polyline points={ma10} stroke="#e2a01c" />
        <polyline points={ma20} stroke="#ea5f78" />
        <polyline points={ma30} stroke="#6cc04d" />
      </g>
      <g fill="none" stroke="#000" strokeWidth="8">
        <path d="M1164 88H1020M1070 61L1020 88L1070 116" />
        <path d="M188 2113H44M94 2086L44 2113L94 2141" />
      </g>
      <text x="1226" y="140" fontSize="92" textLength="166" lengthAdjust="spacingAndGlyphs">
        4.19
      </text>
      <text x="252" y="2140" fontSize="90" textLength="164" lengthAdjust="spacingAndGlyphs">
        1.43
      </text>
      <path d="M38 51H3098V2151H38z" fill="none" stroke="#ececec" strokeWidth="6" />
    </svg>
  );
}

const controls = [
  "M36 20L19 36l17 17M51 20L34 36l17 17",
  "M19 36h34M36 19v34",
  "M19 36h34",
  "M42 19L25 36l17 17",
  "M30 19l17 17-17 17",
  "M20 35V20h16M53 38v15H37",
];

function ChartControls() {
  return (
    <div className="absolute left-[21px] top-[621px] flex gap-[104px]">
      {controls.map((d) => (
        <button key={d} className="size-[72px] rounded-full bg-[#e6e6e6]/80">
          <svg viewBox="0 0 72 72" className="size-[72px]" fill="none" stroke="#5f5f5f" strokeWidth="3.800">
            <path d={d} />
          </svg>
        </button>
      ))}
    </div>
  );
}

function DateAxis() {
  return (
    <div className="h-[78px] bg-linear-to-b from-[#efefef] to-[#fbfbfb]">
      <div className="flex h-[15px] justify-between bg-linear-to-r from-white to-transparent pl-[273px] pr-[12px]">
        <i className="w-[3px] bg-[#888]" />
        <i className="w-[3px] bg-[#888]" />
        <i className="w-[3px] bg-[#888]" />
        <i className="w-[3px] bg-[#888]" />
      </div>
      <div className="flex h-[63px] bg-linear-to-r from-white to-transparent to-60% pl-3 pr-[11px] pt-[5px] text-[35px] font-medium leading-[40px] tracking-[-0.3px] text-[#858585]">
        <Num className="w-[216px] text-[#666]">2024-07-11</Num>
        <Num className="w-[262px] [mask-image:linear-gradient(to_right,#0006,#000_28%)]">10-21</Num>
        <Num className="w-[264px]">01-22</Num>
        <Num>05-09</Num>
        <Num className="ml-auto">08-12</Num>
      </div>
    </div>
  );
}

function VolumePanel() {
  return (
    <section className="relative h-[258px] pl-6 pt-[11px] text-[35px] leading-none text-[#333]">
      <svg viewBox="0 18 3136 774" preserveAspectRatio="none" className="absolute inset-0 h-[258px] w-full">
        <path d="M38 386H3098" stroke="#ececec" strokeWidth="5" strokeDasharray="24 22" />
        <path d="M38 757V21H3098V757" fill="none" stroke="#ececec" strokeWidth="6" />
        {volume.map((bar, i) => {
          const x = 41 + i * STEP;
          return bar.up ? (
            <rect key={i} x={x - 6} y={bar.top} width="12.5" height={758 - bar.top} fill={RED} />
          ) : (
            <g key={i}>
              <rect x={x - 6} y={bar.top} width="12" height={756 - bar.top} fill="#8fb573" />
              <rect x={x - 4} y={bar.top} width="8.500" height={756 - bar.top} fill={GREEN} />
            </g>
          );
        })}
        <g fill="none" strokeWidth="8.500" strokeLinejoin="round">
          <polyline points={average(5)} stroke="#333" />
          <polyline points={average(10)} stroke="#f07743" />
        </g>
      </svg>
      <div className="relative flex items-center">
        <span className="flex h-[47px] w-[162px] items-center gap-[9px] rounded-md bg-[#f2f2f2] pl-3 text-[36px]">
          成交量
          <Caret className="h-[13px] w-[18px] text-[#666]" />
        </span>
        <Num className="ml-3 w-[159px] font-medium tracking-[-0.7px] text-[#37651f]">量:17444</Num>
        <Num className="w-[137px] tracking-[0.9px]">盘后:--</Num>
        <Num className="w-[195px] font-medium tracking-[-1px]">M5:15.96万</Num>
        <Num className="font-medium tracking-[-1px] text-[#ef7742]">M10:27.06万</Num>
      </div>
      <div className="relative flex text-[36px] leading-[36px]">
        换手率:<Num className="tracking-[-0.7px] text-[#4aa8e0]">0.15%</Num>
      </div>
    </section>
  );
}

function MacdPanel() {
  return (
    <section className="relative h-[251px] pl-6 pt-[11px] text-[36px] leading-none text-[#333]">
      <svg viewBox="0 15 3136 753" preserveAspectRatio="none" className="absolute inset-0 h-[251px] w-full">
        <path d="M38 381H3098" stroke="#ececec" strokeWidth="5" strokeDasharray="24 22" />
        <path d="M38 18H3098V746H38z" fill="none" stroke="#ececec" strokeWidth="6" />
        {macdEnds.map((end, i) => (
          <rect
            key={i}
            x={37 + i * STEP}
            y={Math.min(end, 484)}
            width="9"
            height={Math.max(Math.abs(end - 484), 3)}
            fill={end < 484 ? "#c54141" : "#3c922a"}
          />
        ))}
        <g fill="none" strokeWidth="9" strokeLinejoin="round">
          <polyline points={diffLine} stroke="#2f2f2f" />
          <polyline points={deaLine} stroke="#e57547" />
        </g>
      </svg>
      <div className="relative flex items-center">
        <span className="flex h-[48px] w-[297px] items-center justify-between rounded-md bg-[#f0f0f0]/80 pl-3 pr-[14px]">
          <Num>MACD(12,26,9)</Num>
          <Caret className="h-[13px] w-[18px] text-[#666]" />
        </span>
        <span className="ml-2 flex size-9 items-center justify-center rounded-full border-[2.5px] border-[#bdbdbd] text-[26px] text-[#bdbdbd]">
          ?
        </span>
        <Num className="ml-4 w-[216px] font-medium text-[#3c922a]">MACD:-0.05</Num>
        <Num className="tracking-[0.2px]">DIFF:-0.13</Num>
        <span className="ml-auto mr-6 text-[36px] text-[#4a90e2]">查看暗盘资金</span>
      </div>
      <Num className="relative block font-medium leading-[36px] text-[#ef7742]">DEA:-0.11</Num>
    </section>
  );
}

function SectionTabs() {
  return (
    <nav className="flex h-[121px] items-center border-b-2 border-[#c8c8c8] pl-[45px] pt-0.5 text-[44px] text-[#666]">
      <span className="w-[156px]">看点</span>
      <span className="w-[156px]">资讯</span>
      <span className="w-[156px]">盘口</span>
      <span className="w-[150px]">资金</span>
      <span className="relative flex h-full w-[158px] items-center text-[49px] font-bold text-[#333]">
        社区
        <i className="absolute bottom-0 left-[21px] h-3 w-[60px] rounded-full bg-[#fa3c30]" />
      </span>
      <span className="bg-linear-to-r from-[#666] from-80% to-[#aaa] bg-clip-text tracking-[0.5px] text-transparent">
        简况(F10)
      </span>
    </nav>
  );
}

function Action({ label, children }: { label: string; children: ReactNode }) {
  return (
    <button className="flex w-[208px] flex-col items-center pt-[19px]">
      <svg viewBox="0 0 60 60" className="size-[60px]" fill="none" stroke="#ddd" strokeWidth="2.500">
        {children}
      </svg>
      <span className="mt-[11px] text-[35px] leading-[38px] text-[#ddd]">{label}</span>
    </button>
  );
}

function ActionBar() {
  return (
    <footer className="flex h-[153px] bg-[#252525]">
      <div className="flex w-[248px] flex-col items-center pt-[11px]">
        <Caret className="h-[15px] w-[26px] rotate-180 text-[#b0b0b0]" />
        <span className="mt-[18px] text-[36px] leading-[40px] text-[#bbb]">通信服务</span>
        <Num className="mt-[21px] text-[36px] leading-[40px] text-[#e81010]">0.52%</Num>
      </div>
      <Action label="下单">
        <path d="M12 5h36q5 0 5 5v35l-11 11H12q-5 0-5-5V10q0-5 5-5z" />
        <path d="M13 18h34M13 26h34M13 33h34M13 40h24" />
      </Action>
      <Action label="诊股">
        <rect x="3" y="13" width="55" height="41" rx="5" />
        <path d="M19 8.500h22M30 24v21M20 34.500h20M10 57h11M39 57h11" />
      </Action>
      <Action label="删自选">
        <rect x="6" y="8" width="47" height="47" />
        <path d="M17 31h25" />
      </Action>
      <Action label="功能">
        <circle cx="29" cy="31" r="25" />
        <path d="M18 25h22M18 38h22" />
      </Action>
    </footer>
  );
}

export default function App() {
  return (
    <div className="h-[2340px] w-[1080px] overflow-hidden bg-white font-['Roboto','Noto_Sans_CJK_SC',sans-serif]">
      <Header />
      <Quote />
      <News />
      <div className="h-3 bg-[#f4f4f4]" />
      <PeriodTabs />
      <AverageRow />
      <div className="relative">
        <KLine />
        <ChartControls />
      </div>
      <DateAxis />
      <VolumePanel />
      <MacdPanel />
      <div className="h-3 bg-[#f4f4f4]" />
      <SectionTabs />
      <div className="h-[8px]" />
      <ActionBar />
    </div>
  );
}
